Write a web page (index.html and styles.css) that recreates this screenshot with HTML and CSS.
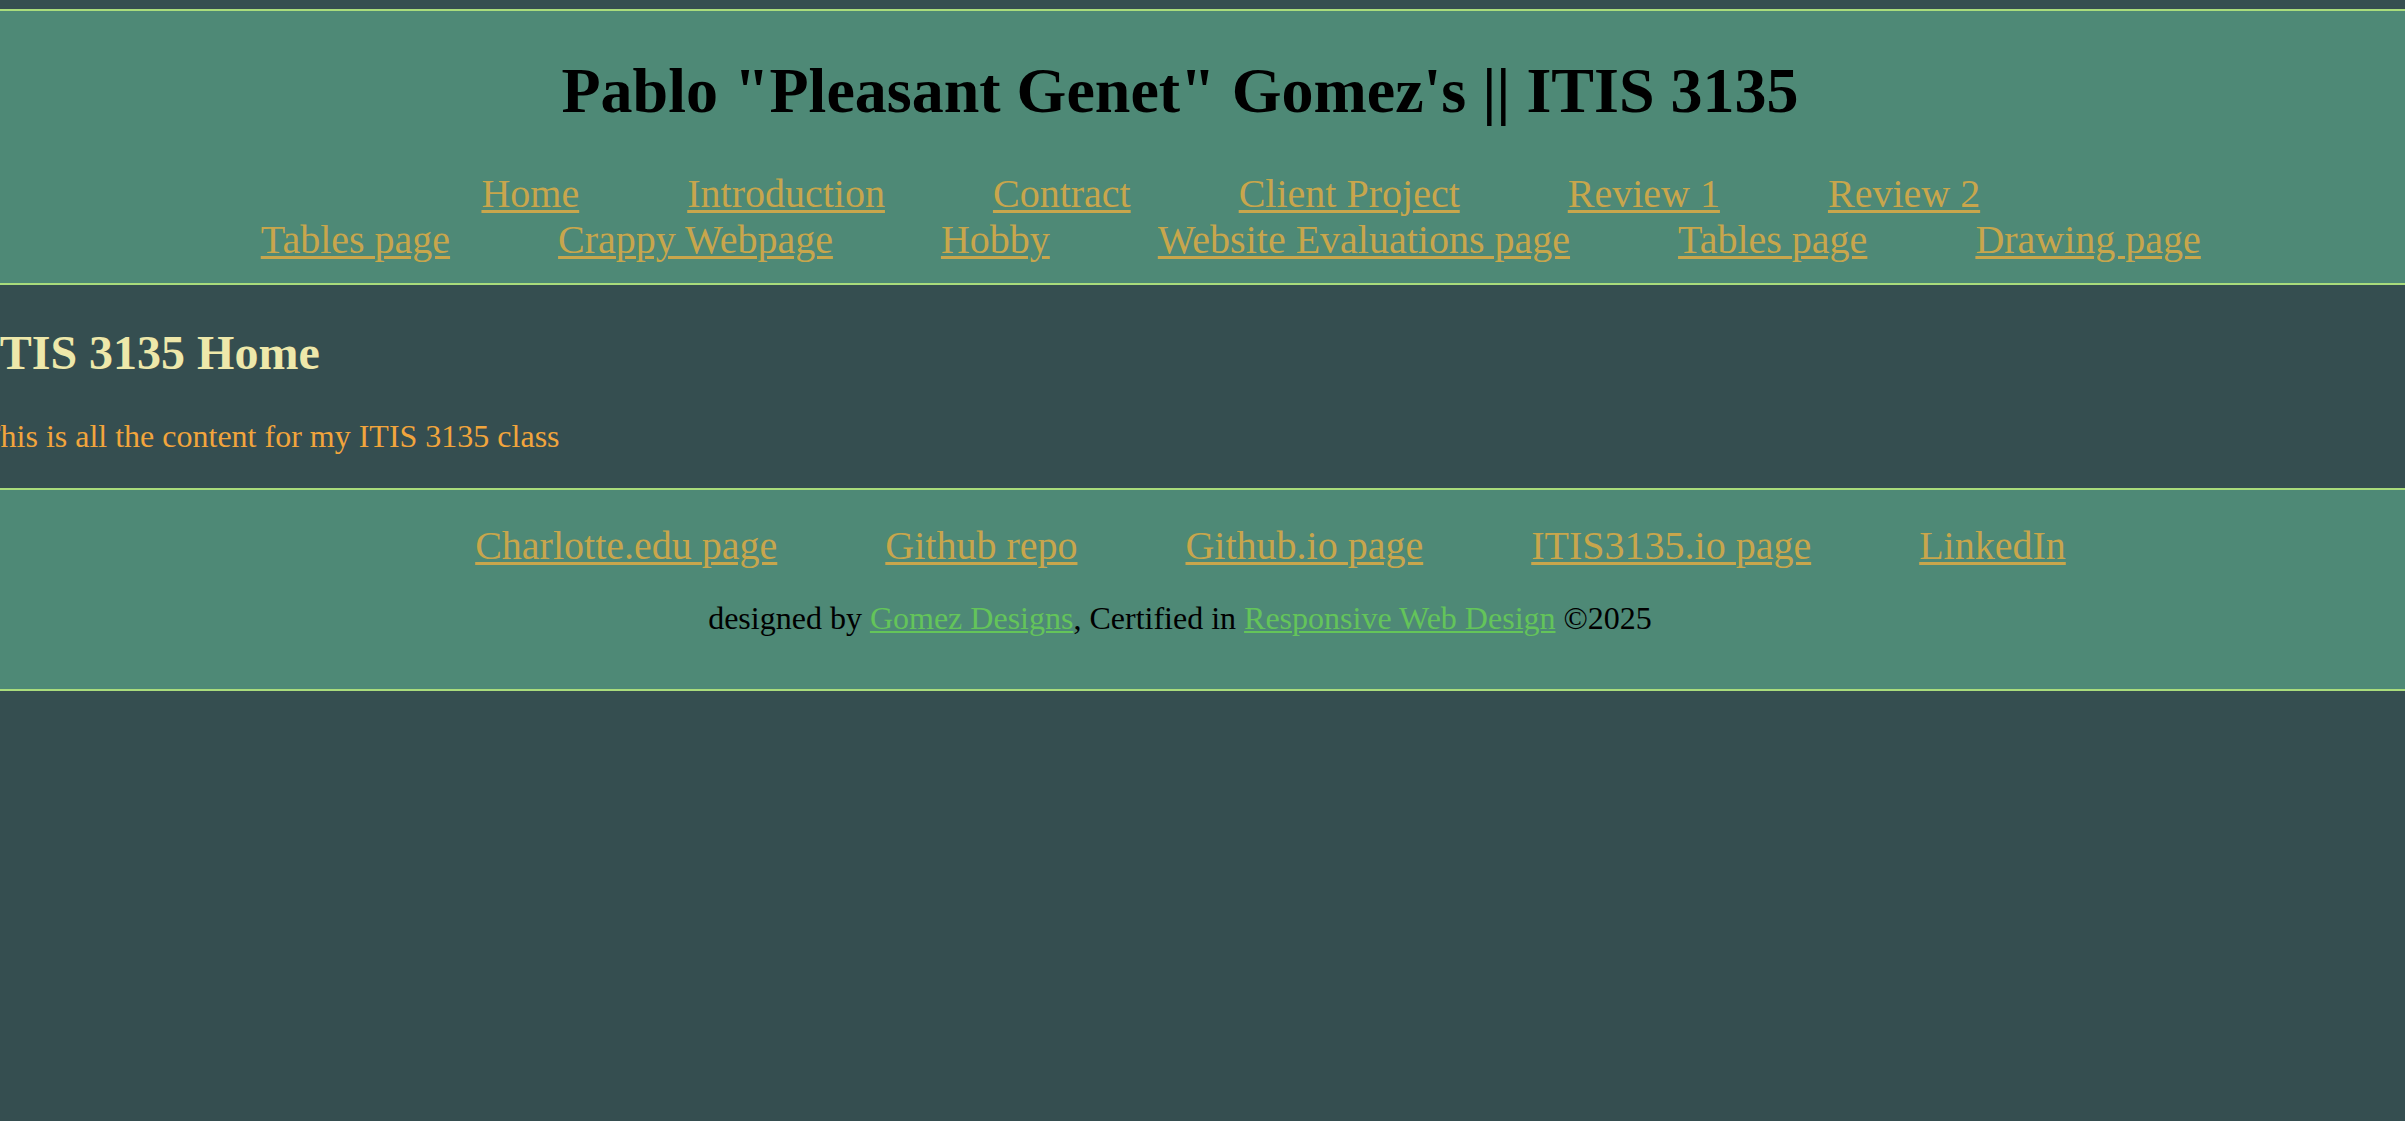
FILE: index.html
```html
<!DOCTYPE html>
<html lang="en">
<head>
<meta charset="utf-8">
<title>Pablo "Pleasant Genet" Gomez's || ITIS 3135</title>
<link rel="stylesheet" href="styles.css">
</head>
<body>
<header class="site-header">
  <h1 class="site-title">Pablo "Pleasant Genet" Gomez's || ITIS 3135</h1>
  <nav class="nav-row">
    <a href="#">Home</a>
    <a href="#">Introduction</a>
    <a href="#">Contract</a>
    <a href="#">Client Project</a>
    <a href="#">Review 1</a>
    <a href="#">Review 2</a>
  </nav>
  <nav class="nav-row">
    <a href="#">Tables page</a>
    <a href="#">Crappy Webpage</a>
    <a href="#">Hobby</a>
    <a href="#">Website Evaluations page</a>
    <a href="#">Tables page</a>
    <a href="#">Drawing page</a>
  </nav>
</header>
<main class="content">
  <h2 class="content-title">ITIS 3135 Home</h2>
  <p class="content-text">This is all the content for my ITIS 3135 class</p>
</main>
<footer class="site-footer">
  <nav class="footer-links">
    <a href="#">Charlotte.edu page</a>
    <a href="#">Github repo</a>
    <a href="#">Github.io page</a>
    <a href="#">ITIS3135.io page</a>
    <a href="#">LinkedIn</a>
  </nav>
  <p class="credits">designed by <a href="#">Gomez Designs</a>, Certified in <a href="#">Responsive Web Design</a> &copy;2025</p>
</footer>
</body>
</html>
```
FILE: styles.css
```css
html, body {
  margin: 0;
  padding: 0;
}

body {
  background: #354e50;
  font-family: "Liberation Serif", "Times New Roman", serif;
  font-size: 32px;
  line-height: 1.15;
  color: #000;
  overflow-x: hidden;
}

.site-header {
  margin-top: 9px;
  background: #4e8976;
  border-top: 2px solid #a9dc7c;
  border-bottom: 2px solid #a9dc7c;
  padding: 0 45px 19.6px 0;
  text-align: center;
}

.site-title {
  font-size: 64px;
  font-weight: bold;
  margin: 42.88px 0 43.88px;
  color: #000;
}

.nav-row {
  display: flex;
  justify-content: center;
  gap: 108px;
  padding-left: 101.6px;
  font-size: 40px;
  white-space: nowrap;
}

.nav-row a,
.footer-links a {
  color: #c8a64c;
  text-decoration: underline;
  text-decoration-thickness: 3px;
  text-underline-offset: 3px;
}

.content {
  margin-left: -19px;
}

.content-title {
  font-size: 48px;
  font-weight: bold;
  color: #eee8aa;
  margin: 39.84px 0 37.8px;
}

.content-text {
  color: #f2a53c;
  margin: 0 0 33.4px;
}

.site-footer {
  background: #4e8976;
  border-top: 2px solid #a9dc7c;
  border-bottom: 2px solid #a9dc7c;
  padding: 32.8px 45px 52.2px 0;
  text-align: center;
}

.footer-links {
  display: flex;
  justify-content: center;
  gap: 108px;
  padding-left: 181px;
  font-size: 40px;
  white-space: nowrap;
}

.credits {
  margin: 31.2px 0 0;
  color: #000;
}

.credits a {
  color: #64c45a;
  text-decoration-thickness: 2px;
  text-underline-offset: 2px;
}
```
